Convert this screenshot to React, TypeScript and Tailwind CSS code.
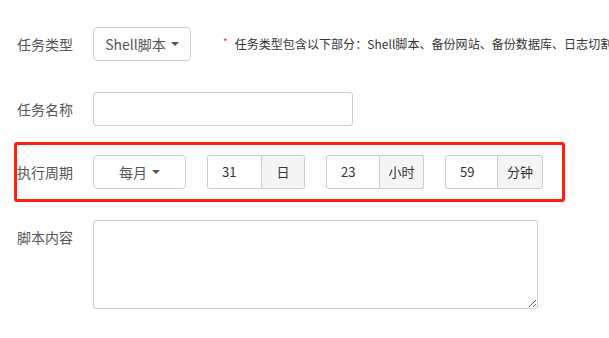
import React from "react";

const font = { fontFamily: '"Noto Sans CJK SC", "Open Sans", sans-serif' };

function Caret() {
  return (
    <span className="ml-[5px] inline-block h-0 w-0 border-x-[4px] border-t-[4px] border-x-transparent border-t-[#555]" />
  );
}

function Group({ value, unit, w, uw }: { value: string; unit: string; w: string; uw: string }) {
  return (
    <div className="flex h-[34px]">
      <div className={`flex h-full items-center rounded-l-[3px] border border-[#ccc] pl-[14px] text-[13px] text-[#333] ${w}`}>
        {value}
      </div>
      <div className={`flex h-full items-center justify-center rounded-r-[3px] border border-l-0 border-[#ccc] bg-[#f5f5f5] text-[13px] text-[#333] ${uw}`}>
        {unit}
      </div>
    </div>
  );
}

export default function App() {
  return (
    <div className="h-[338px] w-full overflow-hidden bg-white" style={font}>
      <div className="flex flex-col pl-[14px] pt-[27px]">
        {/* Row 1 */}
        <div className="flex h-[34px] items-center border-x-[3px] border-transparent">
          <div className="w-[76px] shrink-0 text-[14px] text-[#555]">任务类型</div>
          <div className="flex h-[34px] w-[98px] shrink-0 items-center justify-center rounded-[4px] border border-[#ccc] text-[14px] text-[#555]">
            Shell脚本
            <Caret />
          </div>
          <div className="ml-[32px] flex shrink-0 items-center whitespace-nowrap text-[12px] text-[#333]">
            <span className="-mt-[6px] mr-[7px] text-[10px] text-[#e4393c]">*</span>
            <span className="tracking-[0.05px]">任务类型包含以下部分：Shell脚本、备份网站、备份数据库、日志切割</span>
          </div>
        </div>

        {/* Row 2 */}
        <div className="mt-[31px] flex h-[34px] items-center border-x-[3px] border-transparent">
          <div className="w-[76px] text-[14px] text-[#555]">任务名称</div>
          <div className="h-[34px] w-[260px] rounded-[3px] border border-[#ccc]" />
        </div>

        {/* Row 3 highlighted */}
        <div className="mt-[16px] flex h-[60px] w-[551px] items-center rounded-[3px] border-[3px] border-[#ff1e12]">
          <div className="w-[76px] text-[14px] text-[#555]">执行周期</div>
          <div className="flex h-[34px] w-[93px] items-center justify-center rounded-[4px] border border-[#ccc] text-[14px] text-[#555]">
            每月
            <Caret />
          </div>
          <div className="ml-[21px] flex gap-[21px]">
            <Group value="31" unit="日" w="w-[55px]" uw="w-[43px]" />
            <Group value="23" unit="小时" w="w-[54px]" uw="w-[44px]" />
            <Group value="59" unit="分钟" w="w-[53px]" uw="w-[45px]" />
          </div>
        </div>

        {/* Row 4 */}
        <div className="mt-[18px] flex border-x-[3px] border-transparent">
          <div className="w-[76px] pt-[7px] text-[14px] leading-[20px] text-[#555]">脚本内容</div>
          <textarea className="h-[89px] w-[445px] resize rounded-[3px] border border-[#ccc] outline-none" />
        </div>
      </div>
    </div>
  );
}
